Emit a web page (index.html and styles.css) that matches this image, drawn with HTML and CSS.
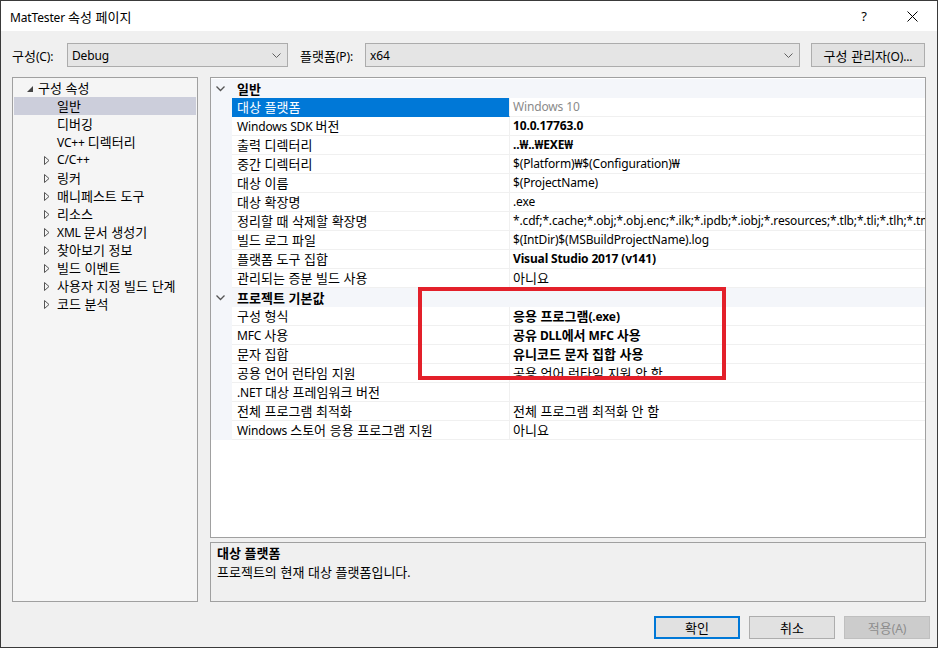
FILE: index.html
```html
<!DOCTYPE html>
<html lang="ko">
<head>
<meta charset="utf-8">
<title>MatTester 속성 페이지</title>
<link rel="stylesheet" href="styles.css">
</head>
<body>
<div class="window">
  <div class="titlebar">
    <span class="title">MatTester <span class="k">속성 페이지</span></span>
    <span class="cap-btn help">?</span>
    <span class="cap-btn close"><svg width="11" height="11" viewBox="0 0 11 11"><path d="M0.5 0.5 L10.5 10.5 M10.5 0.5 L0.5 10.5" stroke="#000" stroke-width="1" fill="none"/></svg></span>
  </div>
  <div class="content">
    <div class="toolbar">
      <span class="lbl lbl-cfg"><span class="k">구성</span>(C):</span>
      <div class="combo combo-cfg"><span class="combo-text">Debug</span><svg class="combo-arrow" width="9" height="5" viewBox="0 0 9 5"><path d="M0.5 0.5 L4.5 4.5 L8.5 0.5" stroke="#606060" stroke-width="1" fill="none"/></svg></div>
      <span class="lbl lbl-plat"><span class="k">플랫폼</span>(P):</span>
      <div class="combo combo-plat"><span class="combo-text">x64</span><svg class="combo-arrow" width="9" height="5" viewBox="0 0 9 5"><path d="M0.5 0.5 L4.5 4.5 L8.5 0.5" stroke="#606060" stroke-width="1" fill="none"/></svg></div>
      <button class="btn btn-mgr"><span class="k">구성 관리자</span>(O)...</button>
    </div>
    <div class="main">
      <div class="tree">
        <div class="node root"><span class="tw"><svg width="6" height="6" viewBox="0 0 6 6"><path d="M6 0 L6 6 L0 6 Z" fill="#444"/></svg></span><span class="lab"><span class="k">구성 속성</span></span></div>
        <div class="node lvl1 sel"><span class="tw"></span><span class="lab"><span class="k">일반</span></span></div>
        <div class="node lvl1"><span class="tw"></span><span class="lab"><span class="k">디버깅</span></span></div>
        <div class="node lvl1"><span class="tw"></span><span class="lab">VC++ <span class="k">디렉터리</span></span></div>
        <div class="node lvl1"><span class="tw"><svg width="6" height="9" viewBox="0 0 6 9"><path d="M0.5 0.5 L5 4.5 L0.5 8.5 Z" fill="none" stroke="#555" stroke-width="1"/></svg></span><span class="lab">C/C++</span></div>
        <div class="node lvl1"><span class="tw"><svg width="6" height="9" viewBox="0 0 6 9"><path d="M0.5 0.5 L5 4.5 L0.5 8.5 Z" fill="none" stroke="#555" stroke-width="1"/></svg></span><span class="lab"><span class="k">링커</span></span></div>
        <div class="node lvl1"><span class="tw"><svg width="6" height="9" viewBox="0 0 6 9"><path d="M0.5 0.5 L5 4.5 L0.5 8.5 Z" fill="none" stroke="#555" stroke-width="1"/></svg></span><span class="lab"><span class="k">매니페스트 도구</span></span></div>
        <div class="node lvl1"><span class="tw"><svg width="6" height="9" viewBox="0 0 6 9"><path d="M0.5 0.5 L5 4.5 L0.5 8.5 Z" fill="none" stroke="#555" stroke-width="1"/></svg></span><span class="lab"><span class="k">리소스</span></span></div>
        <div class="node lvl1"><span class="tw"><svg width="6" height="9" viewBox="0 0 6 9"><path d="M0.5 0.5 L5 4.5 L0.5 8.5 Z" fill="none" stroke="#555" stroke-width="1"/></svg></span><span class="lab">XML <span class="k">문서 생성기</span></span></div>
        <div class="node lvl1"><span class="tw"><svg width="6" height="9" viewBox="0 0 6 9"><path d="M0.5 0.5 L5 4.5 L0.5 8.5 Z" fill="none" stroke="#555" stroke-width="1"/></svg></span><span class="lab"><span class="k">찾아보기 정보</span></span></div>
        <div class="node lvl1"><span class="tw"><svg width="6" height="9" viewBox="0 0 6 9"><path d="M0.5 0.5 L5 4.5 L0.5 8.5 Z" fill="none" stroke="#555" stroke-width="1"/></svg></span><span class="lab"><span class="k">빌드 이벤트</span></span></div>
        <div class="node lvl1"><span class="tw"><svg width="6" height="9" viewBox="0 0 6 9"><path d="M0.5 0.5 L5 4.5 L0.5 8.5 Z" fill="none" stroke="#555" stroke-width="1"/></svg></span><span class="lab"><span class="k">사용자 지정 빌드 단계</span></span></div>
        <div class="node lvl1"><span class="tw"><svg width="6" height="9" viewBox="0 0 6 9"><path d="M0.5 0.5 L5 4.5 L0.5 8.5 Z" fill="none" stroke="#555" stroke-width="1"/></svg></span><span class="lab"><span class="k">코드 분석</span></span></div>
      </div>
      <div class="right">
        <div class="grid">
          <div class="cat"><span class="gut"><svg width="9" height="6" viewBox="0 0 9 6"><path d="M0.5 0.5 L4.5 4.5 L8.5 0.5" stroke="#555" stroke-width="1.3" fill="none"/></svg></span><span class="cat-name k">일반</span></div>
          <div class="row"><span class="gut"></span><span class="name selname"><span class="k">대상 플랫폼</span></span><span class="val dim">Windows 10</span></div>
          <div class="row"><span class="gut"></span><span class="name">Windows SDK <span class="k">버전</span></span><span class="val b">10.0.17763.0</span></div>
          <div class="row"><span class="gut"></span><span class="name"><span class="k">출력 디렉터리</span></span><span class="val b">..₩..₩EXE₩</span></div>
          <div class="row"><span class="gut"></span><span class="name"><span class="k">중간 디렉터리</span></span><span class="val">$(Platform)₩$(Configuration)₩</span></div>
          <div class="row"><span class="gut"></span><span class="name"><span class="k">대상 이름</span></span><span class="val">$(ProjectName)</span></div>
          <div class="row"><span class="gut"></span><span class="name"><span class="k">대상 확장명</span></span><span class="val">.exe</span></div>
          <div class="row"><span class="gut"></span><span class="name"><span class="k">정리할 때 삭제할 확장명</span></span><span class="val">*.cdf;*.cache;*.obj;*.obj.enc;*.ilk;*.ipdb;*.iobj;*.resources;*.tlb;*.tli;*.tlh;*.tmp;*.rsp;*.pgc;*.pgd;*.meta;*.tlog;*.manifest</span></div>
          <div class="row"><span class="gut"></span><span class="name"><span class="k">빌드 로그 파일</span></span><span class="val">$(IntDir)$(MSBuildProjectName).log</span></div>
          <div class="row"><span class="gut"></span><span class="name"><span class="k">플랫폼 도구 집합</span></span><span class="val b">Visual Studio 2017 (v141)</span></div>
          <div class="row"><span class="gut"></span><span class="name"><span class="k">관리되는 증분 빌드 사용</span></span><span class="val"><span class="k">아니요</span></span></div>
          <div class="cat"><span class="gut"><svg width="9" height="6" viewBox="0 0 9 6"><path d="M0.5 0.5 L4.5 4.5 L8.5 0.5" stroke="#555" stroke-width="1.3" fill="none"/></svg></span><span class="cat-name k">프로젝트 기본값</span></div>
          <div class="row"><span class="gut"></span><span class="name"><span class="k">구성 형식</span></span><span class="val b"><span class="k">응용 프로그램</span>(.exe)</span></div>
          <div class="row"><span class="gut"></span><span class="name">MFC <span class="k">사용</span></span><span class="val b"><span class="k">공유</span> DLL<span class="k">에서</span> MFC <span class="k">사용</span></span></div>
          <div class="row"><span class="gut"></span><span class="name"><span class="k">문자 집합</span></span><span class="val b"><span class="k">유니코드 문자 집합 사용</span></span></div>
          <div class="row"><span class="gut"></span><span class="name"><span class="k">공용 언어 런타임 지원</span></span><span class="val"><span class="k">공용 언어 런타임 지원 안 함</span></span></div>
          <div class="row"><span class="gut"></span><span class="name">.NET <span class="k">대상 프레임워크 버전</span></span><span class="val"></span></div>
          <div class="row"><span class="gut"></span><span class="name"><span class="k">전체 프로그램 최적화</span></span><span class="val"><span class="k">전체 프로그램 최적화 안 함</span></span></div>
          <div class="row"><span class="gut"></span><span class="name">Windows <span class="k">스토어 응용 프로그램 지원</span></span><span class="val"><span class="k">아니요</span></span></div>
        </div>
        <div class="desc">
          <div class="desc-title"><span class="k">대상 플랫폼</span></div>
          <div class="desc-text"><span class="k">프로젝트의 현재 대상 플랫폼입니다</span>.</div>
        </div>
      </div>
    </div>
    <div class="footer">
      <button class="btn dlg default"><span class="k">확인</span></button>
      <button class="btn dlg"><span class="k">취소</span></button>
      <button class="btn dlg disabled"><span class="k">적용</span>(A)</button>
    </div>
  </div>
  <div class="annot"></div>
</div>
</body>
</html>
```

FILE: styles.css
```css
* { box-sizing: border-box; }
html, body { margin: 0; padding: 0; }
body {
  width: 938px;
  height: 648px;
  overflow: hidden;
  background: #f0f0f0;
  font-family: "Noto Sans", "Noto Sans CJK KR", sans-serif;
  font-size: 12px;
  letter-spacing: -0.15px;
  color: #000;
}
.k {
  font-family: "Noto Sans CJK KR", sans-serif;
  font-size: 13px;
  letter-spacing: 0;
}
.window {
  position: relative;
  width: 938px;
  height: 648px;
  border: 1px solid #3a3a3a;
  background: #f0f0f0;
  display: flex;
  flex-direction: column;
  overflow: hidden;
}
.titlebar {
  flex: none;
  height: 30px;
  background: #fff;
  display: flex;
  align-items: center;
  padding-left: 9px;
}
.title { flex: 1; white-space: nowrap; }
.cap-btn {
  height: 30px;
  display: flex;
  align-items: center;
  justify-content: center;
}
.help { width: 46px; font-size: 13px; }
.close { width: 50px; }

.content {
  flex: 1;
  min-width: 0;
  display: flex;
  flex-direction: column;
  padding: 0 11px;
}
.toolbar {
  flex: none;
  margin-top: 12px;
  height: 24px;
  display: flex;
  align-items: center;
}
.lbl { white-space: nowrap; flex: none; }
.lbl-cfg { width: 55px; }
.lbl-plat { width: 65px; margin-left: 12px; }
.combo {
  flex: none;
  height: 24px;
  background: #e5e5e5;
  border: 1px solid #acacac;
  display: flex;
  align-items: center;
  padding: 0 6px 0 4px;
}
.combo-text { flex: 1; }
.combo-cfg { width: 221px; }
.combo-plat { width: 435px; }
.btn {
  font-family: inherit;
  font-size: 12px;
  letter-spacing: -0.15px;
  color: #000;
  background: #e1e1e1;
  border: 1px solid #adadad;
  padding: 0;
  margin: 0;
  white-space: nowrap;
}
.btn-mgr { width: 114px; height: 24px; margin-left: 11px; }

.main {
  flex: none;
  margin-top: 10px;
  height: 525px;
  display: grid;
  grid-template-columns: 186px 716px;
  column-gap: 12px;
}
.tree {
  border: 1px solid #a0a0a0;
  background: #f5f5f5;
  padding: 1px 1px 0 1px;
  overflow: hidden;
}
.node {
  height: 18px;
  line-height: 18px;
  display: flex;
  align-items: center;
  white-space: nowrap;
}
.tw {
  flex: none;
  width: 13px;
  height: 18px;
  display: flex;
  align-items: center;
}
.root { padding-left: 11px; }
.root .tw { padding-left: 2px; padding-top: 1px; }
.lvl1 { padding-left: 30px; }
.sel { background: #cccedb; }

.right {
  width: 716px;
  min-width: 0;
  overflow: hidden;
  display: grid;
  grid-template-rows: minmax(0, 1fr) 60px;
  row-gap: 4px;
}
.grid {
  width: 716px;
  border: 1px solid #a0a0a0;
  background: #fff;
  padding-top: 1px;
  overflow: hidden;
}
.cat, .row {
  height: 19px;
  display: grid;
  grid-template-columns: 21px 278px minmax(0, 1fr);
  white-space: nowrap;
  overflow: hidden;
}
.cat { background: #f4f6fa; grid-template-columns: 21px minmax(0, 1fr); }
.gut {
  height: 19px;
  background: #f4f6fa;
  display: flex;
  align-items: center;
  padding-left: 5px;
}
.cat-name { font-weight: bold; padding-left: 5px; line-height: 19px; }
.name {
  padding-left: 5px;
  line-height: 18px;
  border-bottom: 1px solid #f0f0f0;
  border-right: 1px solid #f0f0f0;
  overflow: hidden;
}
.selname { background: #0078d7; color: #fff; border-bottom-color: #0078d7; }
.val {
  min-width: 0;
  padding-left: 3px;
  line-height: 18px;
  border-bottom: 1px solid #f0f0f0;
  overflow: hidden;
}
.b { font-weight: bold; }
.dim { color: #8a8a8a; }

.desc {
  border: 1px solid #a0a0a0;
  background: #f0f0f0;
  padding: 1px 0 0 6px;
}
.desc-title { font-weight: bold; line-height: 18px; }
.desc-text { line-height: 18px; }

.footer {
  flex: none;
  margin-top: 14px;
  margin-right: -4px;
  display: flex;
  justify-content: flex-end;
  gap: 9px;
}
.dlg { width: 86px; height: 23px; }
.default { border-color: #0078d7; box-shadow: inset 0 0 0 1px #0078d7; }
.disabled { background: #cccccc; border-color: #bfbfbf; color: #8d8d8d; }

.annot {
  position: absolute;
  left: 417px;
  top: 286px;
  width: 308px;
  height: 93px;
  border: 4px solid #e3202a;
  pointer-events: none;
}
```
